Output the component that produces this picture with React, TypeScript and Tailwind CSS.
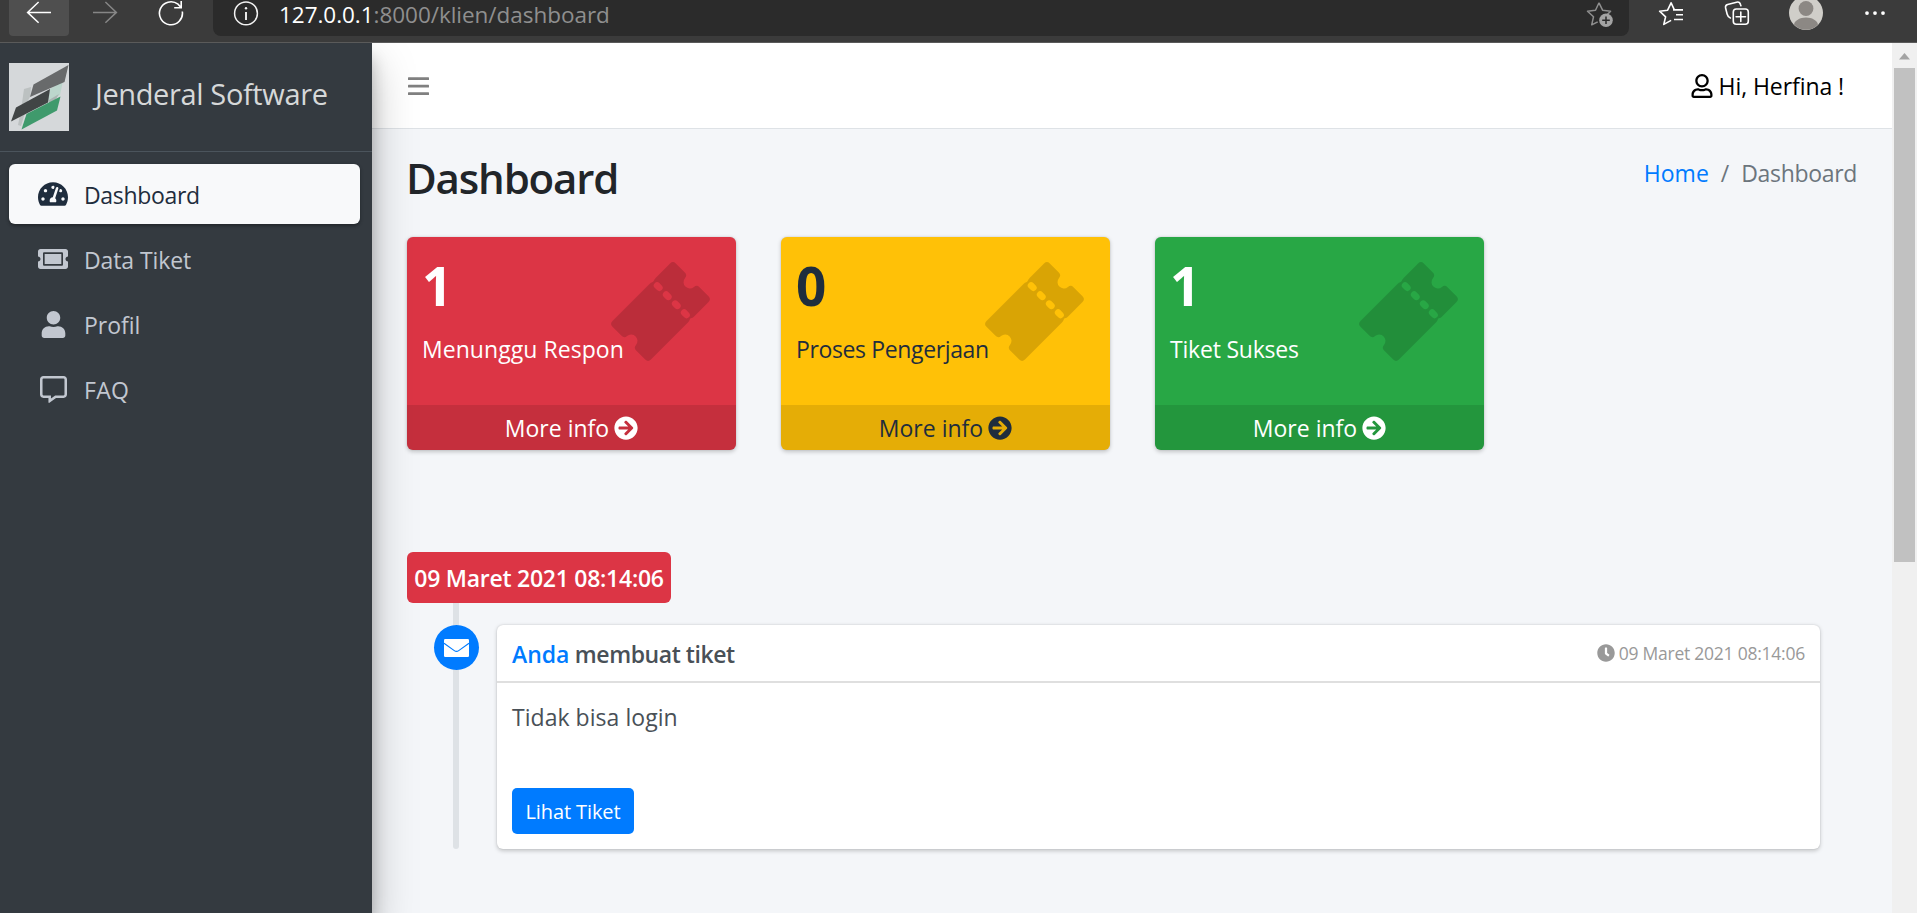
import type { ReactNode } from 'react';
import {
  FaArrowCircleRight,
  FaClock,
  FaRegCommentAlt,
  FaRegUser,
  FaTachometerAlt,
  FaTicketAlt,
  FaUser,
} from 'react-icons/fa';
import { IoTicket } from 'react-icons/io5';

function BrowserBar() {
  return (
    <div className="relative z-20 flex h-[43px] shrink-0 items-start border-b border-[#5a5a5a] bg-[#3b3b3b] pl-[9px]">
      <div className="h-9 w-[60px] rounded-b bg-[#4f4f4f]">
        <svg className="h-9 w-[60px]" viewBox="9 0 60 36" fill="none" stroke="#fff" strokeWidth="1.5">
          <path d="M51 12.4H27.6M38.6 2 27.6 12.4l11 10.3" />
        </svg>
      </div>
      <svg className="ml-1.5 h-9 w-[60px]" viewBox="75 0 60 36" fill="none" stroke="#868686" strokeWidth="1.5">
        <path d="M93 12.4h23.4M105.4 2l11 10.4-11 10.3" />
      </svg>
      <svg className="ml-1.5 h-9 w-[60px]" viewBox="141 0 60 36" fill="none" stroke="#fff" strokeWidth="1.6">
        <path d="M182.3 11.5A11.5 11.5 0 1 1 178 4.2L181 7.5M181.2 1v6.7h-7" />
      </svg>
      <div className="ml-3 flex h-9 w-[1416px] items-start rounded-b-lg bg-[#2b2b2b]">
        <svg className="h-9 w-[66px] shrink-0" viewBox="213 0 66 36" fill="none" stroke="#f2f2f2" strokeWidth="1.5">
          <circle cx="246" cy="13.4" r="11.4" />
          <path d="M246 12v8" strokeWidth="1.9" />
          <circle cx="246" cy="8.3" r="1.2" fill="#f2f2f2" stroke="none" />
        </svg>
        <div className="flex-1 whitespace-pre text-[22.5px] leading-[30px] tracking-[-0.04px] text-[#8f8f8f]">
          <span className="text-white">127.0.0.1</span>:8000/klien/dashboard
        </div>
        <svg className="h-9 w-[60px] shrink-0" viewBox="1569 0 60 36" fill="none" stroke="#8f8f8f" strokeWidth="1.5">
          <path d="M1599 2.8l3.6 7.4 8 1-3.4 3.4M1599 2.8l-3.5 7.4-8 1 6 5.6-1.8 8 6-3" strokeLinejoin="round" />
          <circle cx="1606" cy="20.3" r="6.8" fill="#a3a3a3" stroke="none" />
          <path d="M1606 16.5v7.6M1602.2 20.3h7.6" stroke="#2b2b2b" />
        </svg>
      </div>
      <svg className="ml-3 h-9 w-[60px]" viewBox="1641 0 60 36" fill="none" stroke="#fff" strokeWidth="1.6" strokeLinejoin="round">
        <path d="M1674.5 10.2l-3.4-7.4-3.5 7.4-8 1 6 5.6-1.8 7.6 7.3-4M1673 9.9h10M1676 14.7h7M1674 19.5h9" />
      </svg>
      <svg className="ml-1.5 h-9 w-[60px]" viewBox="1707 0 60 36" fill="none" stroke="#fff" strokeWidth="1.6" strokeLinecap="round">
        <rect x="1733.3" y="9" width="15" height="15.3" rx="3" />
        <path d="M1740.8 12v9.4M1736.1 16.7h9.4M1730.4 18c-2.4-.8-2.8-2-3.3-4l-1.5-6c-.4-2 .6-3 2-3.4l9-2.4c2-.5 3.4.4 4 2.6l.3 1" />
      </svg>
      <svg className="ml-[9px] h-9 w-[60px]" viewBox="1776 0 60 36">
        <circle cx="1806" cy="13" r="17" fill="#d0cec9" />
        <circle cx="1806" cy="8.5" r="7.4" fill="#8c8884" />
        <path d="M1794 24.4c1-4 6-6.8 12-6.8s11 2.8 12 6.8a16 16 0 0 1-24 0z" fill="#8c8884" />
      </svg>
      <svg className="ml-[9px] h-9 w-[60px]" viewBox="1845 0 60 36" fill="#fff">
        <circle cx="1867" cy="13.1" r="1.9" />
        <circle cx="1875" cy="13.1" r="1.9" />
        <circle cx="1883" cy="13.1" r="1.9" />
      </svg>
    </div>
  );
}

function Logo() {
  return (
    <svg className="h-[68px] w-[60px] bg-[#d5d8da]" viewBox="0 0 60 68">
      <path d="M15 26l7-2-1 10-6 10 1 6-4 13-3-1 3-15z" fill="#bcc1c1" />
      <path d="M41 26l13-8-3 14-12 7z" fill="#bcd6cc" />
      <path d="M40 37l10-6-3 5-7 5z" fill="#aab4b2" />
      <path d="M24.5 21.5 59.5 2l-4 17-34.5 15z" fill="#686a6b" />
      <path d="M7 44.5 41 26l-2 13.5L2 58.5z" fill="#414545" />
      <path d="M17.5 51 51.5 33.5l-3.5 14L12.5 66.5z" fill="#3f9a6c" />
    </svg>
  );
}

function MenuIcon() {
  return (
    <svg className="h-6 w-[21px]" viewBox="0 0 21 24" fill="#808080">
      <rect y="3.2" width="21" height="2.8" rx="0.5" />
      <rect y="10.7" width="21" height="2.8" rx="0.5" />
      <rect y="18.2" width="21" height="2.8" rx="0.5" />
    </svg>
  );
}

function MailIcon() {
  return (
    <svg className="h-[18px] w-[25px]" viewBox="0 0 25 18">
      <rect width="25" height="18" rx="1.2" fill="#fff" />
      <path d="M0 4.2l10.3 7.4a3.8 3.8 0 0 0 4.4 0L25 4.2" fill="none" stroke="#007bff" strokeWidth="1.1" />
    </svg>
  );
}

function NavItem({ icon, label, active }: { icon: ReactNode; label: ReactNode; active?: boolean }) {
  return (
    <a
      className={
        active
          ? 'flex h-[60px] items-center gap-4 rounded-md bg-[#f8f9fa] pl-[29px] text-[#1f2d3d] shadow-[0_1.5px_4.5px_rgba(0,0,0,0.12),0_1.5px_3px_rgba(0,0,0,0.24)]'
          : 'flex h-[60px] items-center gap-4 rounded-md pl-[29px] text-[#c2c7d0]'
      }
    >
      <span className="flex w-[30px] justify-center">{icon}</span>
      <span className="pt-0.5">{label}</span>
    </a>
  );
}

function Sidebar() {
  return (
    <aside className="relative z-10 w-[372px] shrink-0 bg-[#343a40] shadow-[0_21px_42px_rgba(0,0,0,0.25),0_15px_15px_rgba(0,0,0,0.22)]">
      <div className="flex h-[109px] items-start border-b border-[#4b545c] pt-5 pl-[9px]">
        <Logo />
        <span className="ml-[26px] pt-2.5 text-[29px] leading-[42px] tracking-[-0.37px] text-[#d6d8d9]">
          Jenderal Software
        </span>
      </div>
      <nav className="mt-3 flex flex-col gap-[5px] pr-3 pl-[9px]">
        <NavItem
          active
          icon={<FaTachometerAlt className="size-[30px]" />}
          label={<span className="tracking-[-0.33px]">Dashboard</span>}
        />
        <NavItem
          icon={<FaTicketAlt className="size-[30px]" />}
          label={<span className="tracking-[-0.1px]">Data Tiket</span>}
        />
        <NavItem icon={<FaUser className="size-[27px]" />} label="Profil" />
        <NavItem
          icon={<FaRegCommentAlt className="size-[27px]" />}
          label={<span className="tracking-[0.29px]">FAQ</span>}
        />
      </nav>
    </aside>
  );
}

function StatCard({ value, label, className }: { value: string; label: ReactNode; className: string }) {
  return (
    <div
      className={`relative flex h-[213px] w-[329px] flex-col rounded-md shadow-[0_0_1.5px_rgba(0,0,0,0.125),0_1.5px_4.5px_rgba(0,0,0,0.2)] ${className}`}
    >
      <IoTicket className="absolute top-[22px] right-[23px] size-[105px] text-black/15" />
      <div className="relative flex-1 px-3.5">
        <div className="pt-[17px] pl-px text-[53px] leading-[64px] font-bold">{value}</div>
        <div className="pt-[13px] pl-px leading-9">{label}</div>
      </div>
      <div className="flex h-[45px] items-center justify-center gap-[5px] rounded-b-md bg-black/10">
        <span className="pt-0.5">More info</span>
        <FaArrowCircleRight className="size-6" />
      </div>
    </div>
  );
}

function TimelineEntry() {
  return (
    <section className="relative mt-[102px] h-[297px]">
      <div className="absolute top-0 left-[46px] h-full w-1.5 rounded-sm bg-[#dee2e6]" />
      <div className="relative flex h-[51px] w-[264px] items-center justify-center rounded-md bg-[#dc3545] pt-0.5 font-semibold tracking-[-0.26px] whitespace-nowrap text-white">
        09 Maret 2021 08:14:06
      </div>
      <div className="relative mt-[22px] flex items-start pl-[27px]">
        <div className="flex size-[45px] items-center justify-center rounded-full bg-[#007bff]">
          <MailIcon />
        </div>
        <div className="ml-[18px] h-[224px] w-[1323px] rounded-md bg-white text-[#495057] shadow-[0_0_1.5px_rgba(0,0,0,0.125),0_1.5px_4.5px_rgba(0,0,0,0.2)]">
          <div className="flex h-[58px] items-center justify-between border-b-2 border-[#dfdfdf] px-[15px]">
            <h3 className="pt-0.5 font-semibold tracking-[-0.43px]">
              <a className="tracking-[-0.05px] text-[#007bff]">Anda</a> membuat tiket
            </h3>
            <span className="flex items-center gap-1 text-[17.5px] tracking-[-0.24px] text-[#999]">
              <FaClock className="size-[18px]" />
              09 Maret 2021 08:14:06
            </span>
          </div>
          <div className="px-[15px] pt-4">
            <p className="leading-9 tracking-[0.04px]">Tidak bisa login</p>
            <button className="mt-[53px] flex h-[46px] w-[122px] items-center justify-center rounded-[5px] bg-[#007bff] pt-0.5 text-[20px] tracking-[-0.1px] text-white">
              Lihat Tiket
            </button>
          </div>
        </div>
      </div>
    </section>
  );
}

function ScrollBar() {
  return (
    <div className="flex w-[25px] shrink-0 flex-col items-center bg-[#f0f0f0]">
      <svg className="h-[25px] w-[25px]" viewBox="0 0 25 25" fill="#a3a3a3">
        <path d="M7 16.5 12.5 10l5.5 6.5z" />
      </svg>
      <div className="h-[494px] w-[21px] bg-[#c1c1c1]" />
    </div>
  );
}

export default function App() {
  return (
    <div className="flex h-[913px] w-[1917px] flex-col overflow-hidden bg-[#f4f6f9] font-['Open_Sans','Noto_Sans',sans-serif] text-[23px]">
      <BrowserBar />
      <div className="flex min-h-0 flex-1">
        <Sidebar />
        <div className="flex min-w-0 flex-1 flex-col">
          <header className="flex h-[86px] items-center justify-between border-b border-[#dee2e6] bg-white pr-12 pl-9">
            <MenuIcon />
            <div className="flex items-center gap-1.5 text-black">
              <FaRegUser className="h-6 w-[22px]" />
              <span className="pt-0.5 tracking-[-0.08px]">Hi, Herfina !</span>
            </div>
          </header>
          <main className="pl-[35px]">
            <div className="flex h-[108px] items-start justify-between pr-[35px]">
              <h1 className="-ml-px pt-[23px] text-[42px] leading-[52px] font-semibold tracking-[-1.16px] text-[#212529]">
                Dashboard
              </h1>
              <div className="flex gap-3 pt-[26px] leading-9 text-[#6c757d]">
                <a className="text-[#007bff]">Home</a>
                <span>/</span>
                <span className="tracking-[-0.33px]">Dashboard</span>
              </div>
            </div>
            <div className="flex gap-[45px]">
              <StatCard
                value="1"
                className="bg-[#dc3545] text-white"
                label={<span className="tracking-[0.05px]">Menunggu Respon</span>}
              />
              <StatCard
                value="0"
                className="bg-[#ffc107] text-[#1f2d3d]"
                label={<span className="tracking-[-0.37px]">Proses Pengerjaan</span>}
              />
              <StatCard
                value="1"
                className="bg-[#28a745] text-white"
                label={<span className="tracking-[-0.21px]">Tiket Sukses</span>}
              />
            </div>
            <TimelineEntry />
          </main>
        </div>
        <ScrollBar />
      </div>
    </div>
  );
}
